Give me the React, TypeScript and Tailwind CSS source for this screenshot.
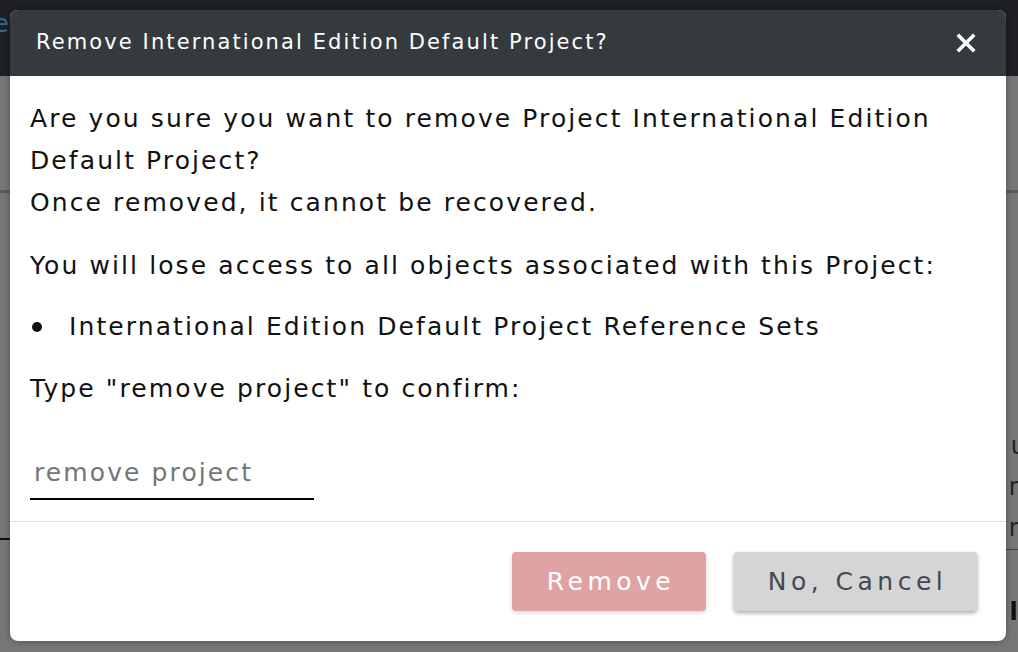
import React from "react";

const font = { fontFamily: '"DejaVu Sans", "Open Sans", sans-serif' };

export default function App() {
  return (
    <div className="relative w-[1018px] h-[652px] overflow-hidden bg-[#777777]" style={font}>
      {/* background page (dimmed) */}
      <div className="flex flex-col h-full">
        <div className="h-[76px] bg-[#1f2024] flex items-start shrink-0">
          <span className="text-[#2f6d90] text-[24px] leading-none mt-[12px] -ml-[6px]">e</span>
        </div>
        <div className="h-[117px] shrink-0 border-b-[3px] border-[#5a5a5a]" />
        <div className="flex-1 flex">
          <div className="flex-1 flex flex-col">
            <div className="h-[347px] border-b-2 border-[#111]" />
          </div>
          <div className="w-[262px] flex flex-col">
            <div className="h-[356px] flex flex-col justify-end items-end text-[#222] text-[24px] leading-[41px]">
              <span className="-mr-[8px]">u</span>
              <span className="-mr-[6px]">n</span>
              <span className="-mr-[6px]">n</span>
            </div>
            <div className="h-[1px] bg-[#444]" />
            <div className="flex-1 flex items-end justify-end pb-[22px] text-[24px] font-bold text-[#111]">
              <span className="-mr-[16px]">le</span>
            </div>
          </div>
        </div>
      </div>

      {/* modal dialog */}
      <div className="absolute left-[10px] top-[10px] w-[996px] h-[631px] bg-white rounded-[8px] overflow-hidden flex flex-col shadow-[0_0_6px_rgba(0,0,0,0.35)]">
        <div className="h-[66px] bg-[#353a3e] flex items-center justify-between pl-[26px] pr-[30px] shrink-0">
          <div className="text-white text-[21px] tracking-[2.1px]">Remove International Edition Default Project?</div>
          <svg width="20" height="20" viewBox="0 0 20 20">
            <path d="M3 3 L17 17 M17 3 L3 17" stroke="white" strokeWidth="3.6" strokeLinecap="square" />
          </svg>
        </div>
        <div className="flex-1 flex flex-col px-[20px] pt-[22px] text-[25px] leading-[42px] text-[#111] tracking-[2.1px]">
          <p>
            Are you sure you want to remove Project International Edition
            <br />
            Default Project?
            <br />
            Once removed, it cannot be recovered.
          </p>
          <p className="mt-[21px]">You will lose access to all objects associated with this Project:</p>
          <div className="mt-[19px] flex items-center">
            <span className="w-[10px] h-[10px] rounded-full bg-[#111] ml-[2px] mr-[27px] shrink-0" />
            <span>International Edition Default Project Reference Sets</span>
          </div>
          <p className="mt-[20px]">Type "remove project" to confirm:</p>
          <div className="mt-[42px] w-[284px] border-b-2 border-black pb-[4px] pl-[4px] text-[#757575]">
            remove project
          </div>
        </div>
        <div className="h-[120px] border-t border-[#dee2e6] flex items-center justify-end gap-[28px] pr-[29px] shrink-0">
          <div className="w-[194px] h-[59px] rounded-[4px] bg-[#dfa3a3] text-white text-[25px] tracking-[4.5px] pl-[4px] flex items-center justify-center shadow-[0_2px_4px_rgba(0,0,0,0.15)]">
            Remove
          </div>
          <div className="w-[243px] h-[59px] rounded-[4px] bg-[#d5d5d5] text-[#434854] text-[25px] tracking-[4.5px] pl-[4px] flex items-center justify-center shadow-[0_2px_4px_rgba(0,0,0,0.35)]">
            No, Cancel
          </div>
        </div>
      </div>
    </div>
  );
}
